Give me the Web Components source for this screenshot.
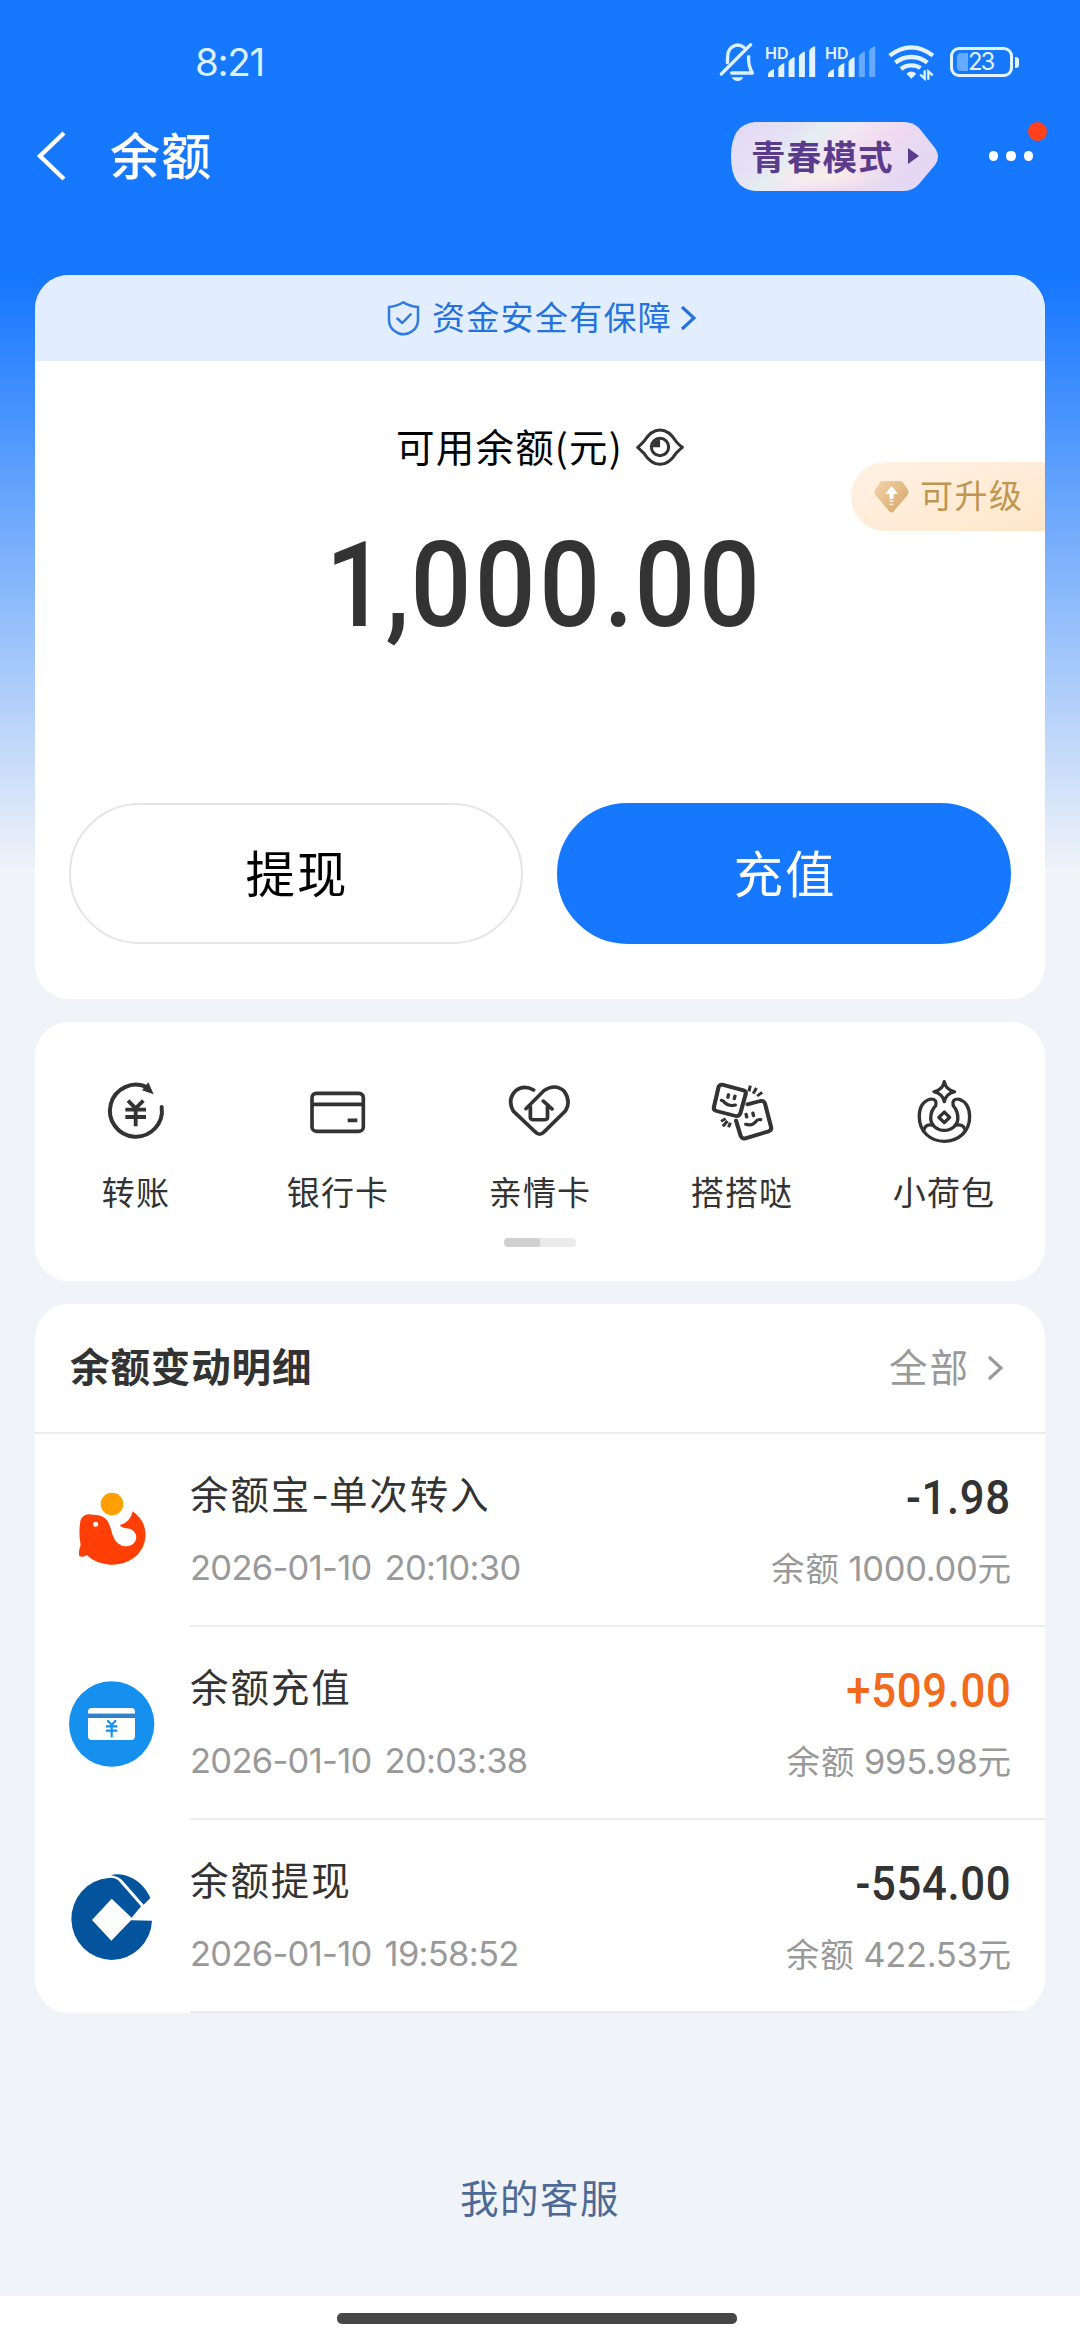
<!DOCTYPE html>
<html lang="zh-CN">
<head>
<meta charset="utf-8">
<title>余额</title>
<style>
  html, body { margin: 0; padding: 0; }
  body {
    width: 1080px; height: 2340px; overflow: hidden;
    font-family: Inter, "Noto Sans CJK SC", sans-serif;
    color: #333;
  }
</style>
</head>
<body>
<balance-app></balance-app>

<script>
const CJK = '"Noto Sans CJK SC", sans-serif';

/* Icon set: [width, height, viewBox, markup] */
const ICONS = {
  mute: [36, 40, '54 68 108 120', `
    <g fill="none" stroke="#dcf1ff" stroke-width="10" stroke-linecap="round" stroke-linejoin="round">
      <path d="M129 84 Q110 70 92 84 Q80 94 80 112 L79 130"/>
      <path d="M143 112 Q141 138 154 161 H92"/>
      <path d="M149 76 L61 164"/></g>
    <path d="M92 174 H127 Q122 185 110 185 Q97 185 92 174Z" fill="#dcf1ff"/>`],
  wifi: [46, 36, '563 74 138 108', `
    <g fill="none" stroke="#e3f3ff" stroke-width="13">
      <path d="M568 109 Q600 84 633 84 Q666 84 698 109"/>
      <path d="M585 130 Q606 113 633 113 Q660 113 681 130"/>
      <path d="M602 149 Q615 138 633 138 Q651 138 660 147"/></g>
    <path d="M618 163 Q633 150 648 163 L633 178Z" fill="#e3f3ff"/>
    <path d="M673 153 V178 L660 166 M684 181 V156 L697 168" stroke="#e3f3ff" stroke-width="7" fill="none"/>`],
  back: [30, 50, '0 0 30 50', `<path d="M28 2 L4 25 L28 48" fill="none" stroke="#fff" stroke-width="4.4"/>`],
  shield: [33, 36, '142 89 99 108', `
    <g fill="none" stroke="#2f7be2" stroke-width="7.500" stroke-linejoin="round">
      <path d="M191 96 Q210 108 235 110 V150 Q234 172 218 182 Q205 192 191 192 Q177 192 165 182 Q149 172 148 150 V110 Q173 108 191 96Z"/>
      <path d="M171 143 L188 158 L215 130"/></g>`],
  chevron: [15, 26, '0 0 15 26', `<path d="M1 2 L13 13 L1 24" fill="none" stroke="currentColor" stroke-width="3.100"/>`],
  eye: [48, 38, '885 476 144 114', `
    <g fill="none" stroke="#333" stroke-width="9">
      <path d="M890 534 Q899 527 909 516 Q930 482 957 482 Q984 482 1005 516 Q1014 527 1024 534 Q1014 542 1005 552 Q984 585 957 585 Q930 585 909 552 Q899 542 890 534Z" stroke-linejoin="round"/>
      <circle cx="957" cy="533" r="26"/></g>
    <path d="M957 511 V534 H935 Q936 512 957 511Z" fill="#333"/>`],
  gem: [35, 32, '0 0 35 32', `
    <defs><linearGradient id="g" x1="0" y1="0" x2="1" y2="1"><stop offset="0" stop-color="#f4d5ab"/><stop offset="1" stop-color="#d3a263"/></linearGradient></defs>
    <path d="M9 0 H26 Q28 0 29.500 2 L34 9 Q35 12 33.500 14 L20 30 Q17.500 33 15 30 L1.500 14 Q0 12 1 9 L5.500 2 Q7 0 9 0Z" fill="url(#g)"/>
    <path d="M17.500 5 L24 13 H19.500 V18 H15.500 V13 H11Z" fill="#fff"/>
    <path d="M15.500 20 H19.500 M15.500 23.500 H19.500" stroke="#ffeeda" stroke-width="1.600"/>`],
  transfer: [66, 66, '129 87 198 198', `
    <g fill="none" stroke="#333" stroke-width="12" stroke-linecap="round">
      <path d="M262 112 A78 78 0 1 0 305 171"/></g>
    <path d="M265 97 L281 133 L246 121Z" fill="#333"/>
    <g stroke="#333" stroke-width="11.500" fill="none"><path d="M204 152 L227 175 L250 152 M227 172 V229 M196 179 H258 M196 201 H258"/></g>`],
  card: [66, 66, '735 87 198 198', `
    <g fill="none" stroke="#333" stroke-width="11">
      <rect x="756" y="130" width="154" height="114" rx="13"/><path d="M755 163 H910 M863 211 H892"/></g>`],
  heart: [66, 66, '103.600 87 184.800 198', `
    <g fill="none" stroke="#333" stroke-width="10.500" stroke-linecap="round" stroke-linejoin="round">
      <path d="M178 120 Q150 103 127 123 Q104 150 121 183 L183 246 Q195 259 207 246 L267 183 Q284 155 264 124 Q239 99 207 122 L157 176"/>
      <path d="M205 153 L230 177 M169 170 V202 Q169 209 176 209 H210 Q217 209 217 202 V170"/></g>`],
  stickers: [66, 66, '669.200 87 184.800 198', `
    <g fill="none" stroke="#333" stroke-width="11.500" stroke-linecap="round" stroke-linejoin="round">
      <path d="M706 104 L766 121 Q774 124 772 132 L757 190 Q753 200 744 198 L690 183 Q681 180 683 171 L696 111 Q699 103 706 104Z"/>
      <path d="M777 163 L813 153 Q823 151 826 161 L843 231 Q845 240 836 244 L771 265 Q762 267 758 258 L745 212"/>
      <g stroke-width="9.500"><path d="M704 151 Q712 154 713 158 Q725 170 743 165 M772 223 Q790 229 801 214 Q805 207 814 209"/>
      <path d="M724 134 L722 142 M742 138 L740 146 M773 193 L775 201 M792 189 L794 197"/></g>
      <g stroke-width="8.500" stroke-linecap="butt"><path d="M785 107 L781 124 M802 114 L793 131 M818 127 L804 138 M703 214 L716 206 M708 229 L721 213 M724 232 L729 218"/></g></g>`],
  pouch: [66, 66, '1234.800 87 184.800 198', `
    <g fill="none" stroke="#333" stroke-width="9.500" stroke-linejoin="round" stroke-linecap="round">
      <path d="M1328 95 Q1332 119 1357 125 Q1332 131 1328 155 Q1324 131 1299 125 Q1324 119 1328 95Z"/>
      <path d="M1290 147 Q1258 156 1258 200 C1258 246 1290 274 1328 274 C1366 274 1399 246 1399 200 Q1398 156 1367 147 Q1348 147 1353 167 Q1366 182 1366 205 A38 36 0 0 1 1290 205 Q1290 182 1304 167 Q1309 147 1290 147Z"/>
      <path d="M1297 226 Q1275 220 1271 240 M1359 226 Q1382 220 1386 240"/>
      <path d="M1328 186 L1343 202 L1328 218 L1313 202Z"/></g>`],
  whale: [86, 86, '117 592 258 258', `
    <circle cx="246" cy="640" r="34" fill="#ff9f00"/>
    <path d="M151 692 Q155 674 175 671 Q190 672 206 674 Q229 679 237 700 Q243 712 247 731 Q259 768 290 767 Q316 763 319 741 Q317 715 290 713 Q277 713 269 704 Q301 696 308 662 Q347 690 347 734 Q345 778 310 803 Q280 824 240 822 Q195 818 170 793 Q160 801 148 796 Q144 784 152 763 Q145 730 151 692Z" fill="#ff3f05"/>
    <circle cx="197" cy="701" r="7.500" fill="#fff"/>`],
  topup: [86, 86, '117 180 258 258', `
    <circle cx="245" cy="309" r="128" fill="#1590ee"/>
    <path d="M174 278 V272 Q174 261 185 261 H304 Q315 261 315 272 V278Z M174 291 H315 V346 Q315 357 304 357 H185 Q174 357 174 346Z" fill="#fff"/>
    <path d="M174 284.500 H315" stroke="#2f83c8" stroke-width="13"/>
    <path d="M232 298 L245 312 L258 298 M245 310 V349 M228 316 H262 M228 329 H262" fill="none" stroke="#1590ee" stroke-width="6.500"/>`],
  ccb: [86, 86, '117 759 258 258', `
    <path d="M236 771 Q252 769 264 777 L333 856 L305 890 L245 833 L186 897 L244 959 L303 898 L366 899 A121 123 0 1 1 236 771Z" fill="#03539d"/>
    <path d="M243 763 Q260 757 285 763 Q337 778 361 831 L341 851 L278 779 Q264 766 243 763Z" fill="#03539d"/>`]
};

function define(name, css, html) {
  customElements.define(name, class extends HTMLElement {
    constructor() {
      super();
      const t = document.createElement('template');
      t.innerHTML = `<style>${css}</style>${html}`;
      this.attachShadow({ mode: 'open' }).append(t.content.cloneNode(true));
    }
  });
}

customElements.define('ui-icon', class extends HTMLElement {
  connectedCallback() {
    if (this.shadowRoot) return;
    const [w, h, box, body] = ICONS[this.getAttribute('name')];
    this.attachShadow({ mode: 'open' }).innerHTML = `
      <style>:host{display:block;flex:none;width:${w}px;height:${h}px}svg{display:block;overflow:visible}</style>
      <svg width="${w}" height="${h}" viewBox="${box}" preserveAspectRatio="none">${body}</svg>`;
  }
});

customElements.define('signal-bars', class extends HTMLElement {
  connectedCallback() {
    if (this.shadowRoot) return;
    const level = +this.getAttribute('level');
    const tops = [23, 17, 11, 5.5, 0];
    const bars = tops.map((y, i) =>
      `<path d="M${i * 10.3} ${y + 5} Q${i * 10.3 + 1} ${y + 2} ${i * 10.3 + 6} ${y} V31 H${i * 10.3}Z" fill="${i < level ? '#e3f3ff' : '#66abff'}"/>`).join('');
    this.attachShadow({ mode: 'open' }).innerHTML = `
      <style>
        :host{display:grid;width:50px;height:34px;flex:none}
        span,svg{grid-area:1/1}
        span{font:600 16px/16px Inter,sans-serif;color:#e3f3ff;margin-top:0}
        svg{margin:1px 0 0 3px;overflow:visible}
      </style>
      <span>HD</span><svg width="48" height="31">${bars}</svg>`;
  }
});

define('battery-meter', `
  :host{display:flex;align-items:center;gap:2px}
  .cell{box-sizing:border-box;width:63px;height:30px;border:3px solid #e3f3ff;border-radius:9px;display:grid;align-items:center}
  .fill,.num{grid-area:1/1}
  .fill{width:11px;height:18px;margin-left:4px;border-radius:4px 0 0 4px;background:#66abff}
  .num{font:400 24px/24px Inter,sans-serif;letter-spacing:-2.200px;color:#e3f3ff;margin-left:15px}
  .nub{width:4px;height:11px;border-radius:0 3px 3px 0;background:#e3f3ff}`,
  `<div class="cell"><div class="fill"></div><div class="num"><slot></slot></div></div><div class="nub"></div>`);

define('status-bar', `
  :host{display:flex;align-items:center;height:36px;padding:44px 0 0 195px;color:#dcf1ff}
  .time{font-size:38.500px;line-height:36px;letter-spacing:-1.300px;width:524px}
  .icons{display:flex;align-items:center}
  signal-bars{margin-left:10px}`,
  `<div class="time">8:21</div>
   <div class="icons"><ui-icon name="mute"></ui-icon>
     <signal-bars level="5"></signal-bars><signal-bars level="3"></signal-bars>
     <ui-icon name="wifi" style="margin-left:13px"></ui-icon>
     <battery-meter style="margin-left:16px">23</battery-meter></div>`);

define('mode-badge', `
  :host{display:grid;width:207px;height:69px}
  svg,.label{grid-area:1/1}
  .label{display:flex;align-items:center;padding-left:20px;gap:14px;
    font:700 34.500px/66px ${CJK};letter-spacing:1.200px;color:#5b3c8c;margin-top:-3px}
  i{width:0;height:0;border-left:11px solid #5b3c8c;border-top:8.500px solid transparent;border-bottom:8.500px solid transparent;margin-top:3px}`,
  `<svg width="207" height="69">
     <defs><linearGradient id="b" x1="0" y1="0" x2="1" y2=".35">
       <stop offset="0" stop-color="#e2daf4"/><stop offset=".28" stop-color="#e6e0f5"/><stop offset=".42" stop-color="#e4eef1"/>
       <stop offset=".55" stop-color="#f3e6f4"/><stop offset=".75" stop-color="#f0daf0"/><stop offset="1" stop-color="#e4d8f3"/></linearGradient>
       <radialGradient id="c"><stop offset="0" stop-color="#faf0e6"/><stop offset="1" stop-color="#faf0e6" stop-opacity="0"/></radialGradient></defs>
     <path d="M24 0 H173 Q182 0 188 6 L204 26 Q210 34.500 204 43 L188 62 Q182 69 173 69 H24 Q0 67 0 34.500 Q0 2 24 0Z" fill="url(#b)"/>
     <ellipse cx="95" cy="54" rx="62" ry="14" fill="url(#c)"/>
   </svg>
   <div class="label"><slot></slot><i></i></div>`);

define('more-menu', `
  :host{display:flex;position:relative;gap:8px;width:44px;height:10px;align-items:center}
  i{width:9.300px;height:9.300px;border-radius:50%;background:#fff}
  b{position:absolute;right:-14px;top:-29px;width:19px;height:19px;border-radius:50%;background:#ff411c}`,
  `<i></i><i></i><i></i><b></b>`);

define('nav-bar', `
  :host{display:flex;align-items:center;height:70px;padding:41px 47px 1px 36px}
  h1{margin:-6px 0 0;font:500 50px/70px ${CJK};letter-spacing:1.300px;color:#fff;padding-left:44px;flex:1}
  more-menu{margin-left:51px}`,
  `<ui-icon name="back"></ui-icon><h1>余额</h1><mode-badge>青春模式</mode-badge><more-menu></more-menu>`);

define('ui-card', `
  :host{display:block;background:#fff;border-radius:34px;overflow:hidden;margin:0 35px}`, `<slot></slot>`);

define('security-banner', `
  :host{display:flex;justify-content:center;align-items:center;height:86px;padding-left:3px;background:#e2eefd;color:#2372dd}
  .t{font:400 33px/80px ${CJK};letter-spacing:1.300px;margin:-4px 9px 0 12px}`,
  `<ui-icon name="shield"></ui-icon><div class="t"><slot></slot></div><ui-icon name="chevron"></ui-icon>`);

define('upgrade-tag', `
  :host{position:absolute;right:0;top:187px;display:flex;align-items:center;box-sizing:border-box;width:194px;height:69px;padding-left:23px;
    border-radius:34px 0 0 34px;background:linear-gradient(160deg,#fff2e5,#ffe7cb);color:#bf9650}
  .t{font:400 33px/60px ${CJK};letter-spacing:1.500px;margin:-5px 0 0 11px;white-space:nowrap}`,
  `<ui-icon name="gem"></ui-icon><div class="t"><slot></slot></div>`);

define('pill-button', `
  :host{display:block;box-sizing:border-box;width:454px;height:141px;border-radius:71px;border:2px solid #e5e5e5;
    text-align:center;font:400 49.500px/134px ${CJK};letter-spacing:2px;text-indent:2px;color:#000}
  :host([primary]){background:#1677ff;border-color:#1677ff;color:#fff}`, `<slot></slot>`);

define('balance-card', `
  :host{display:block;position:relative;height:724px}
  .label{display:flex;align-items:center;justify-content:center;height:60px;padding-top:56px;color:#000}
  .label span{font:400 38.500px/60px ${CJK};letter-spacing:1.200px;margin:-5px 13px 0 0}
  .amount{font:500 119px/120px Roboto,sans-serif;color:#333;text-align:center;margin-top:49px;height:120px;padding-left:10px;letter-spacing:4px;transform:scaleX(.9)}
  .one{letter-spacing:-1px}.sep{letter-spacing:1px}
  .actions{display:flex;justify-content:space-between;margin:157px 34px 0}`,
  `<security-banner>资金安全有保障</security-banner>
   <upgrade-tag>可升级</upgrade-tag>
   <div class="label"><span>可用余额(元)</span><ui-icon name="eye"></ui-icon></div>
   <div class="amount"><span class="one">1</span><span class="sep">,</span>000<span class="sep">.</span>00</div>
   <div class="actions"><pill-button>提现</pill-button><pill-button primary>充值</pill-button></div>`);

define('shortcut-item', `
  :host{display:flex;flex-direction:column;align-items:center;width:202px}
  .t{font:400 33px/48px ${CJK};letter-spacing:1.200px;margin-top:22px}`,
  `<slot name="icon"></slot><div class="t"><slot></slot></div>`);

define('page-indicator', `
  :host{display:flex;width:72px;height:9px;border-radius:4px;background:#ebebeb;overflow:hidden;margin:23px auto 0}
  i{width:36px;background:#d0d0d0;border-radius:3px}`, `<i></i>`);

define('shortcut-panel', `
  :host{display:block;height:259px}
  .row{display:flex;padding-top:57px}`,
  `<div class="row">
     <shortcut-item><ui-icon slot="icon" name="transfer"></ui-icon>转账</shortcut-item>
     <shortcut-item><ui-icon slot="icon" name="card"></ui-icon>银行卡</shortcut-item>
     <shortcut-item><ui-icon slot="icon" name="heart"></ui-icon>亲情卡</shortcut-item>
     <shortcut-item><ui-icon slot="icon" name="stickers"></ui-icon>搭搭哒</shortcut-item>
     <shortcut-item><ui-icon slot="icon" name="pouch"></ui-icon>小荷包</shortcut-item>
   </div><page-indicator></page-indicator>`);

define('list-header', `
  :host{display:flex;align-items:center;box-sizing:border-box;height:130px;border-bottom:2px solid #ececec;padding:0 42px 0 35px}
  .t{flex:1;font:700 39.500px/60px ${CJK};letter-spacing:.9px;margin-top:-7px}
  .m{font:400 38.500px/60px ${CJK};letter-spacing:2px;color:#999;margin:-7px 18px 0 0}
  ui-icon{color:#999;margin-top:-1px}`,
  `<div class="t"><slot></slot></div><div class="m">全部</div><ui-icon name="chevron"></ui-icon>`);

define('record-row', `
  :host{display:flex;height:193px;padding-left:34px}
  .ic{display:flex;align-items:center;width:121px}
  .body{flex:1;display:flex;justify-content:space-between;box-sizing:border-box;border-bottom:2px solid #ececec;padding:30px 33px 0 0}
  .l,.r{display:flex;flex-direction:column}
  .r{align-items:flex-end}
  .name{height:56px;font:400 38.500px/56px ${CJK};letter-spacing:1.900px}
  .amt{font:500 47.500px/56px Roboto,sans-serif;letter-spacing:.7px;transform:scaleX(.92);transform-origin:right;margin-right:1px;margin-top:6px}
  :host([income]) .amt{color:#f26a1b}
  .time,.bal{font-size:34.500px;line-height:50px;color:#999;white-space:pre}
  .time{margin-top:23px;letter-spacing:-.7px;word-spacing:4px}
  .bal{margin-top:16px;font-family:Inter,${CJK};letter-spacing:-.3px}
  .bal span{font-family:${CJK};font-weight:400;font-size:33.500px;letter-spacing:1px}`,
  `<div class="ic"><slot name="icon"></slot></div>
   <div class="body">
     <div class="l"><div class="name"><slot name="name"></slot></div><div class="time"><slot name="time"></slot></div></div>
     <div class="r"><div class="amt"><slot name="amount"></slot></div><div class="bal"><span>余额 </span><slot name="balance"></slot><span>元</span></div></div>
   </div>`);

const RECORDS = [
  ['whale', '余额宝<span style="font-family:Inter;letter-spacing:0;line-height:0">-</span>单次转入', '2026-01-10 20:10:30', '-1.98', '1000.00', ''],
  ['topup', '余额充值', '2026-01-10 20:03:38', '+509.00', '995.98', 'income'],
  ['ccb', '余额提现', '2026-01-10 19:58:52', '-554.00', '422.53', '']
];

define('balance-app', `
  :host{display:flex;flex-direction:column;width:1080px;height:2340px;
    background:linear-gradient(#1677ff 0 280px,#f0f3f8 870px)}
  .cards{display:flex;flex-direction:column;gap:23px;padding-top:83px}
  .help{font:400 38.500px/60px ${CJK};letter-spacing:1.500px;color:#4d6a96;text-align:center;margin-top:153px;flex:1}
  .home{height:44px;background:#fff;display:flex;justify-content:center}
  .home i{width:400px;height:11px;margin:17px 7px 0 0;border-radius:5px;background:#474747}`,
  `<status-bar></status-bar><nav-bar></nav-bar>
   <div class="cards">
     <ui-card><balance-card></balance-card></ui-card>
     <ui-card><shortcut-panel></shortcut-panel></ui-card>
     <ui-card><list-header>余额变动明细</list-header>${RECORDS.map(([i, n, t, a, b, k]) => `
       <record-row ${k}><ui-icon slot="icon" name="${i}"></ui-icon><span slot="name">${n}</span><span slot="time">${t}</span><span slot="amount">${a}</span><span slot="balance">${b}</span></record-row>`).join('')}
     </ui-card>
   </div>
   <div class="help">我的客服</div>
   <div class="home"><i></i></div>`);
</script>
</body>
</html>
